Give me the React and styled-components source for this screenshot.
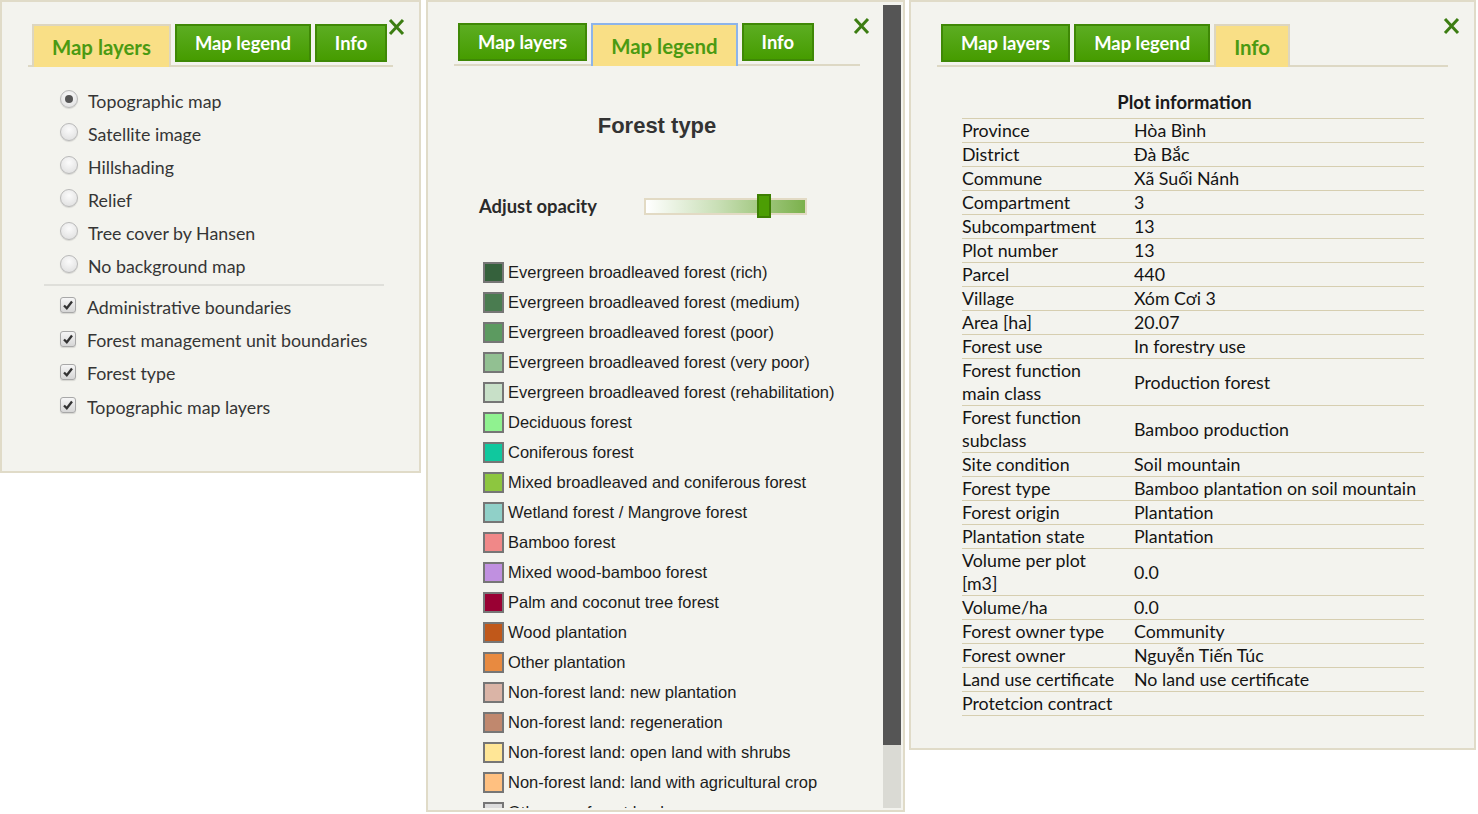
import React from 'react';
import styled, { createGlobalStyle } from 'styled-components';

const GlobalStyle = createGlobalStyle`
  html, body {
    margin: 0;
    padding: 0;
    background: #fff;
  }
  body {
    font-family: Lato, "Liberation Sans", sans-serif;
  }
`;

const Page = styled.div`
  display: flex;
  align-items: flex-start;
  width: 1478px;
`;

const Panel = styled.section`
  position: relative;
  box-sizing: border-box;
  flex: none;
  width: ${(p) => p.$width}px;
  height: ${(p) => p.$height}px;
  margin-right: ${(p) => p.$gap || 0}px;
  background: #f3f3ee;
  border: 2px solid #e0dbc8;
  padding: ${(p) => p.$pad || '22px 26px 0'};
`;

const LegendPanel = styled(Panel)`
  display: flex;
  align-items: flex-start;
`;

const ScrollContent = styled.div`
  box-sizing: border-box;
  flex: 1;
  min-width: 0;
  height: 803px;
  overflow: hidden;
  padding: 18px 23px 0 26px;
`;

const ScrollTrack = styled.div`
  flex: none;
  width: 18px;
  height: 803px;
  background: #dadad4;
`;

const ScrollThumb = styled.div`
  height: 740px;
  background: #555;
`;

const TabBar = styled.div`
  display: flex;
  align-items: flex-start;
  gap: 4px;
  padding-left: 4px;
  border-bottom: 2px solid #ddd8c4;
`;

const Tab = styled.div`
  box-sizing: border-box;
  height: ${(p) => (p.$active ? 43 : 38)}px;
  margin-bottom: ${(p) => (p.$active ? -2 : 0)}px;
  padding: 0 18px;
  font-family: Lato, "Open Sans", sans-serif;
  font-weight: 700;
  font-size: ${(p) => (p.$active ? 20.4 : 18.4)}px;
  line-height: ${(p) => (p.$active ? 43 : 35)}px;
  white-space: nowrap;
  color: ${(p) => (p.$active ? '#4b9a12' : '#fff')};
  background: ${(p) =>
    p.$active ? '#f9df86' : 'linear-gradient(#5cad22, #469c00)'};
  border: 2px solid
    ${(p) => (p.$active ? (p.$focus ? '#8db4ea' : '#ddd6c0') : '#3f8806')};
  border-bottom: ${(p) => (p.$active ? 'none' : '2px solid #3f8806')};
`;

const Close = styled.div`
  position: absolute;
  top: ${(p) => p.$top}px;
  right: ${(p) => p.$right}px;
  width: 17px;
  height: 18px;
  svg {
    display: block;
  }
`;

const OptionList = styled.div`
  display: flex;
  flex-direction: column;
  padding: ${(p) => p.$pad};
`;

const Option = styled.label`
  display: flex;
  align-items: center;
  gap: ${(p) => p.$gap}px;
  height: ${(p) => p.$h || 33}px;
  font-size: 17.8px;
  color: #353535;
`;

const Radio = styled.span`
  box-sizing: border-box;
  width: 18px;
  height: 18px;
  border-radius: 50%;
  border: 1px solid #b9b9b9;
  background: radial-gradient(circle at 50% 35%, #fbfbfb, #dcdcdc);
  box-shadow: 0 1px 1px rgba(0, 0, 0, 0.12);
  display: flex;
  align-items: center;
  justify-content: center;
  margin-top: -3px;

  &::after {
    content: '';
    display: ${(p) => (p.$checked ? 'block' : 'none')};
    width: 8px;
    height: 8px;
    border-radius: 50%;
    background: #555;
  }
`;

const Check = styled.span`
  box-sizing: border-box;
  width: 16px;
  height: 16px;
  border-radius: 3px;
  border: 1px solid #a8a8a8;
  background: linear-gradient(#f6f6f6, #d6d6d6);
  box-shadow: 0 1px 1px rgba(0, 0, 0, 0.12);
  margin-top: -3px;
  svg {
    display: block;
  }
`;

const Divider = styled.div`
  height: 2px;
  background: #dfdfda;
  margin: 2px 9px 2px 16px;
`;

const Title = styled.h2`
  margin: 47px 0 0;
  text-align: center;
  font-family: "Liberation Sans", Arial, sans-serif;
  font-size: 22px;
  line-height: 26px;
  font-weight: 700;
  color: #333;
`;

const OpacityRow = styled.div`
  display: flex;
  align-items: center;
  height: 24px;
  margin-top: 55px;
  padding-left: 25px;
`;

const OpacityLabel = styled.span`
  width: 165px;
  font-size: 18.4px;
  font-weight: 700;
  color: #2a2a2a;
`;

const Slider = styled.div`
  position: relative;
  box-sizing: border-box;
  width: 163px;
  height: 17px;
  border: 2px solid #e2dac4;
  background: linear-gradient(90deg, #ffffff, #c9dfb6 45%, #7bb14c);
`;

const Thumb = styled.span`
  position: absolute;
  top: -6px;
  box-sizing: border-box;
  width: 14px;
  height: 24px;
  background: #4c9e04;
  border: 2px solid #3d7f02;
`;

const Legend = styled.div`
  display: flex;
  flex-direction: column;
  margin-top: 39px;
  padding-left: 29px;
`;

const LegendItem = styled.div`
  display: flex;
  align-items: center;
  gap: 4px;
  height: 30px;
  font-family: "Liberation Sans", Arial, sans-serif;
  font-size: 16.5px;
  color: #1c1c1c;
  white-space: nowrap;
`;

const Swatch = styled.span`
  box-sizing: border-box;
  flex: none;
  width: 21px;
  height: 21px;
  border: 2px solid #767676;
  background: ${(p) => p.$color};
`;

const InfoTitle = styled.div`
  margin: 24px 0 4px;
  padding-right: 16px;
  text-align: center;
  font-size: 18.5px;
  font-weight: 700;
  line-height: 23px;
  color: #1a1a1a;
`;

const InfoTable = styled.table`
  width: calc(100% - 49px);
  margin-left: 25px;
  border-collapse: collapse;
  border-top: 1px solid #d6ceb0;
`;

const Row = styled.tr`
  border-bottom: 1px solid #d6ceb0;
`;

const Cell = styled.td`
  padding: 0;
  width: ${(p) => (p.$label ? '172px' : 'auto')};
  height: 23px;
  font-size: 17.8px;
  line-height: 23px;
  color: #141414;
  vertical-align: middle;
  white-space: nowrap;
`;

function CloseIcon() {
  return (
    <svg width="17" height="18" viewBox="0 0 17 18">
      <path d="M2 2 L15 16 M15 2 L2 16" stroke="#3c7d12" strokeWidth="3" />
    </svg>
  );
}

function CheckMark() {
  return (
    <svg width="14" height="14" viewBox="0 0 14 14">
      <path
        d="M3 7.5 L5.8 10.3 L11 3.5"
        fill="none"
        stroke="#333"
        strokeWidth="2.3"
      />
    </svg>
  );
}

function Tabs({ active, focus }) {
  const names = ['Map layers', 'Map legend', 'Info'];
  return (
    <TabBar>
      {names.map((n) => (
        <Tab key={n} $active={n === active} $focus={focus}>
          {n}
        </Tab>
      ))}
    </TabBar>
  );
}

const radios = [
  'Topographic map',
  'Satellite image',
  'Hillshading',
  'Relief',
  'Tree cover by Hansen',
  'No background map',
];

const checks = [
  'Administrative boundaries',
  'Forest management unit boundaries',
  'Forest type',
  'Topographic map layers',
];

const legend = [
  ['#35613c', 'Evergreen broadleaved forest (rich)'],
  ['#4a7c50', 'Evergreen broadleaved forest (medium)'],
  ['#5c9a60', 'Evergreen broadleaved forest (poor)'],
  ['#92c092', 'Evergreen broadleaved forest (very poor)'],
  ['#c8e0c8', 'Evergreen broadleaved forest (rehabilitation)'],
  ['#90f290', 'Deciduous forest'],
  ['#10c89e', 'Coniferous forest'],
  ['#8dc63f', 'Mixed broadleaved and coniferous forest'],
  ['#90d0c8', 'Wetland forest / Mangrove forest'],
  ['#f08888', 'Bamboo forest'],
  ['#c090e0', 'Mixed wood-bamboo forest'],
  ['#990033', 'Palm and coconut tree forest'],
  ['#c0581a', 'Wood plantation'],
  ['#e88a40', 'Other plantation'],
  ['#dab4a6', 'Non-forest land: new plantation'],
  ['#c0886e', 'Non-forest land: regeneration'],
  ['#ffe696', 'Non-forest land: open land with shrubs'],
  ['#ffc080', 'Non-forest land: land with agricultural crop'],
  ['#dcdcdc', 'Other non-forest land'],
];

const plot = [
  ['Province', 'Hòa Bình'],
  ['District', 'Đà Bắc'],
  ['Commune', 'Xã Suối Nánh'],
  ['Compartment', '3'],
  ['Subcompartment', '13'],
  ['Plot number', '13'],
  ['Parcel', '440'],
  ['Village', 'Xóm Cơi 3'],
  ['Area [ha]', '20.07'],
  ['Forest use', 'In forestry use'],
  [['Forest function', 'main class'], 'Production forest'],
  [['Forest function', 'subclass'], 'Bamboo production'],
  ['Site condition', 'Soil mountain'],
  ['Forest type', 'Bamboo plantation on soil mountain'],
  ['Forest origin', 'Plantation'],
  ['Plantation state', 'Plantation'],
  [['Volume per plot', '[m3]'], '0.0'],
  ['Volume/ha', '0.0'],
  ['Forest owner type', 'Community'],
  ['Forest owner', 'Nguyễn Tiến Túc'],
  ['Land use certificate', 'No land use certificate'],
  ['Protetcion contract', ''],
];

export default function App() {
  return (
    <>
      <GlobalStyle />
      <Page>
        <Panel $width={421} $height={473} $gap={5}>
          <Tabs active="Map layers" />
          <Close $top={16} $right={14}>
            <CloseIcon />
          </Close>
          <OptionList $pad="17px 0 0 32px">
            {radios.map((r, i) => (
              <Option key={r} $gap={10}>
                <Radio $checked={i === 0} />
                {r}
              </Option>
            ))}
          </OptionList>
          <Divider />
          <OptionList $pad="2px 0 0 32px">
            {checks.map((c) => (
              <Option key={c} $gap={11} $h={33.4}>
                <Check>
                  <CheckMark />
                </Check>
                {c}
              </Option>
            ))}
          </OptionList>
        </Panel>

        <LegendPanel $width={479} $height={812} $gap={4} $pad="3px 2px 2px 0">
          <ScrollContent>
            <Tabs active="Map legend" focus />
            <Title>Forest type</Title>
            <OpacityRow>
              <OpacityLabel>Adjust opacity</OpacityLabel>
              <Slider>
                <Thumb style={{ left: '111px' }} />
              </Slider>
            </OpacityRow>
            <Legend>
              {legend.map(([c, t]) => (
                <LegendItem key={t}>
                  <Swatch $color={c} />
                  {t}
                </LegendItem>
              ))}
            </Legend>
          </ScrollContent>
          <ScrollTrack>
            <ScrollThumb />
          </ScrollTrack>
          <Close $top={15} $right={33}>
            <CloseIcon />
          </Close>
        </LegendPanel>

        <Panel $width={567} $height={750}>
          <Tabs active="Info" />
          <Close $top={15} $right={14}>
            <CloseIcon />
          </Close>
          <InfoTitle>Plot information</InfoTitle>
          <InfoTable>
            <tbody>
              {plot.map(([k, v]) => (
                <Row key={Array.isArray(k) ? k.join(' ') : k}>
                  <Cell $label>
                    {Array.isArray(k) ? (
                      <>
                        {k[0]}
                        <br />
                        {k[1]}
                      </>
                    ) : (
                      k
                    )}
                  </Cell>
                  <Cell>{v}</Cell>
                </Row>
              ))}
            </tbody>
          </InfoTable>
        </Panel>
      </Page>
    </>
  );
}
